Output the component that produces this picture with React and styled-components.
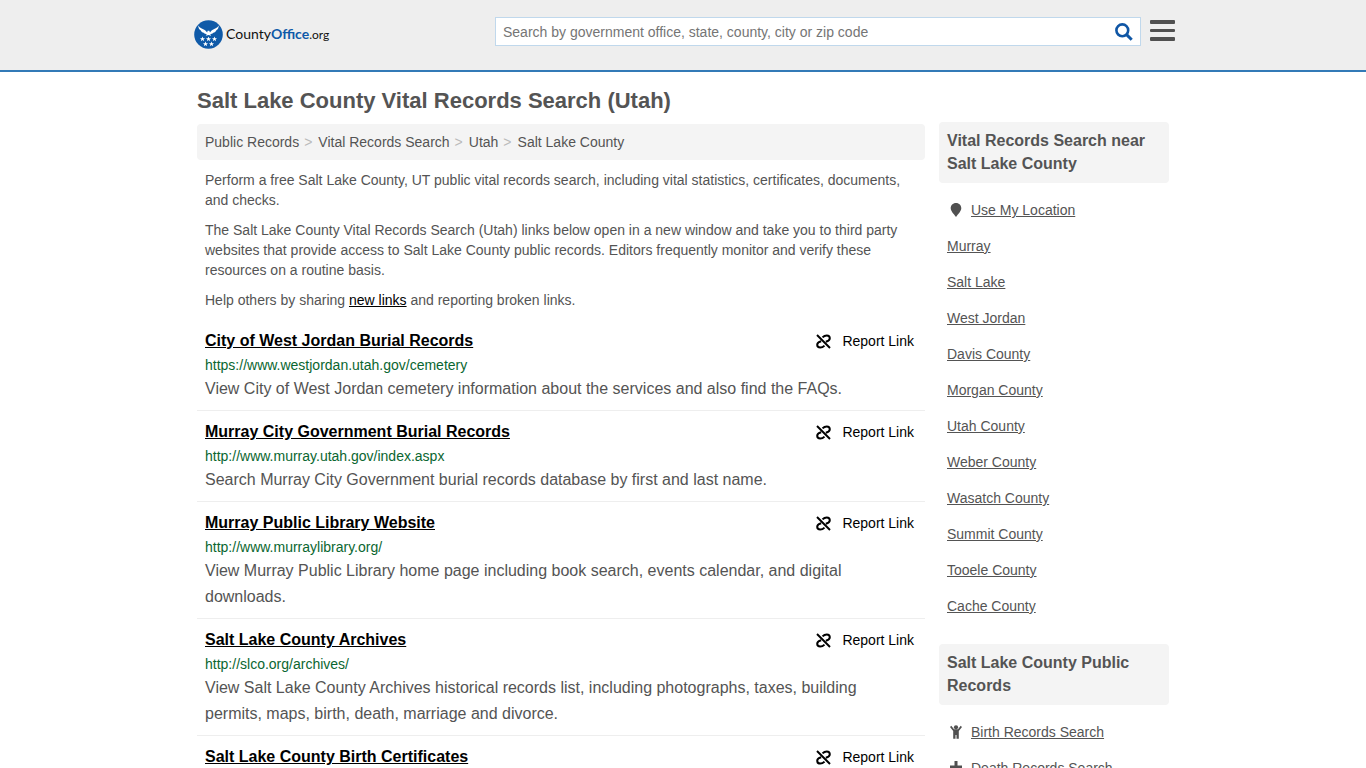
import React from "react";
import styled, { createGlobalStyle } from "styled-components";

const GlobalStyle = createGlobalStyle`
  * {
    box-sizing: border-box;
  }
  body {
    margin: 0;
    background: #fff;
    color: #545454;
    font-family: Arial, "Liberation Sans", sans-serif;
    font-size: 14px;
    line-height: 20px;
  }
  a {
    color: inherit;
  }
`;

const crumbs = ["Public Records", "Vital Records Search", "Utah", "Salt Lake County"];

const records = [
  {
    title: "City of West Jordan Burial Records",
    url: "https://www.westjordan.utah.gov/cemetery",
    text: "View City of West Jordan cemetery information about the services and also find the FAQs.",
  },
  {
    title: "Murray City Government Burial Records",
    url: "http://www.murray.utah.gov/index.aspx",
    text: "Search Murray City Government burial records database by first and last name.",
  },
  {
    title: "Murray Public Library Website",
    url: "http://www.murraylibrary.org/",
    text: "View Murray Public Library home page including book search, events calendar, and digital downloads.",
  },
  {
    title: "Salt Lake County Archives",
    url: "http://slco.org/archives/",
    text: "View Salt Lake County Archives historical records list, including photographs, taxes, building permits, maps, birth, death, marriage and divorce.",
  },
  {
    title: "Salt Lake County Birth Certificates",
  },
];

const places = [
  "Murray",
  "Salt Lake",
  "West Jordan",
  "Davis County",
  "Morgan County",
  "Utah County",
  "Weber County",
  "Wasatch County",
  "Summit County",
  "Tooele County",
  "Cache County",
];

const starPath = "M0 -2.6L.7 -.8L2.5 -.8L1.1 .4L1.6 2.2L0 1.1L-1.6 2.2L-1.1 .4L-2.5 -.8L-.7 -.8Z";
const stars = [
  [8.5, 19],
  [14.5, 19],
  [20.5, 19],
  [11.5, 24],
  [17.5, 24],
];

function LogoMark() {
  return (
    <svg width="29" height="29" viewBox="0 0 29 29" aria-hidden="true">
      <circle cx="14.5" cy="14.5" r="14.3" fill="#0f5aa8" />
      <path
        fill="#fff"
        d="M4.200 5.500C6 8.200 8.500 8.700 10.200 9.800C11.500 10.500 12.300 11.500 13.200 12.400L13.600 10.800L15.300 10.700L16 12.400C16.700 11.500 17.500 10.500 18.800 9.800C20.500 8.700 23 8.200 24.800 5.500C24.700 7.900 23.900 9.300 22.400 10.300C21.700 11.700 20.600 12.500 19.300 12.800C18.300 13.900 17.300 14.200 16.200 14.200L17.300 15.700L14.500 15L11.700 15.700L12.800 14.200C11.700 14.200 10.700 13.900 9.700 12.800C8.400 12.500 7.300 11.700 6.600 10.300C5.100 9.300 4.300 7.900 4.200 5.500Z"
      />
      {stars.map(([x, y]) => (
        <path key={`${x}-${y}`} d={starPath} fill="#fff" transform={`translate(${x} ${y})`} />
      ))}
    </svg>
  );
}

function SearchIcon() {
  return (
    <svg width="18" height="18" viewBox="0 0 18 18" fill="none" stroke="#0f56a5" aria-hidden="true">
      <circle cx="7.300" cy="7.300" r="5.900" strokeWidth="2.600" />
      <path d="M11.600 11.600L16.700 16.700" strokeWidth="3" />
    </svg>
  );
}

function MenuIcon() {
  return (
    <svg width="25" height="22" viewBox="0 0 25 22" fill="#505050" aria-hidden="true">
      <rect y="0" width="25" height="4" rx="1" />
      <rect y="9" width="25" height="3" rx="1" />
      <rect y="17" width="25" height="4" rx="1" />
    </svg>
  );
}

function BrokenLinkIcon() {
  return (
    <svg width="15" height="15" viewBox="0 0 15 15" fill="none" stroke="#000" strokeWidth="2" aria-hidden="true">
      <path d="M1 1L14 14" />
      <path d="M6.500 3.400C7.900 1.900 9.400 1.400 10.800 1.400C12.600 1.400 13.800 2.600 13.800 4.200C13.800 6 12.300 7.100 9.800 7.700" />
      <path d="M8.500 11.600C7.100 13.100 5.600 13.600 4.200 13.600C2.400 13.600 1.200 12.400 1.200 10.800C1.200 9 2.700 7.900 5.200 7.300" />
    </svg>
  );
}

function PinIcon() {
  return (
    <svg width="12" height="14" viewBox="0 0 12 14" fill="#505050" aria-hidden="true">
      <path d="M6 0C9.200 0 11.300 2.300 11.300 5.200C11.300 8 8.500 10.500 6 14C3.500 10.500 .7 8 .7 5.200C.7 2.300 2.800 0 6 0Z" />
    </svg>
  );
}

function ChildIcon() {
  return (
    <svg width="12" height="14" viewBox="0 0 12 14" fill="#505050" aria-hidden="true">
      <circle cx="6" cy="2.300" r="2.100" />
      <path d="M1.300 .8L4 4.300H8L10.700 .8L12 1.900L8.800 6V13.800H6.500V10H5.500V13.800H3.200V6L0 1.900Z" />
    </svg>
  );
}

function PlusIcon() {
  return (
    <svg width="12" height="14" viewBox="0 0 12 14" fill="#505050" aria-hidden="true">
      <path d="M4.500 0H7.500V4.500H12V7.500H7.500V12H4.500V7.500H0V4.500H4.500Z" />
    </svg>
  );
}

function App() {
  return (
    <>
      <GlobalStyle />
      <Header>
        <HeaderInner>
          <Logo href="#">
            <LogoMark />
            <LogoText>
              County<b>Office</b>
              <small>.org</small>
            </LogoText>
          </Logo>
          <SearchForm onSubmit={(e) => e.preventDefault()}>
            <SearchInput
              type="text"
              aria-label="Search"
              placeholder="Search by government office, state, county, city or zip code"
            />
            <IconButton type="submit" aria-label="Search">
              <SearchIcon />
            </IconButton>
          </SearchForm>
          <IconButton type="button" aria-label="Menu">
            <MenuIcon />
          </IconButton>
        </HeaderInner>
      </Header>

      <Page>
        <PageTitle>Salt Lake County Vital Records Search (Utah)</PageTitle>
        <Columns>
          <Main>
            <Breadcrumb>
              {crumbs.map((crumb) => (
                <li key={crumb}>
                  <a href="#">{crumb}</a>
                </li>
              ))}
            </Breadcrumb>
            <Intro>
              <p>
                Perform a free Salt Lake County, UT public vital records search, including vital statistics,
                certificates, documents, and checks.
              </p>
              <p>
                The Salt Lake County Vital Records Search (Utah) links below open in a new window and take you to
                third party websites that provide access to Salt Lake County public records. Editors frequently
                monitor and verify these resources on a routine basis.
              </p>
              <p>
                Help others by sharing <a href="#">new links</a> and reporting broken links.
              </p>
            </Intro>
            {records.map((record) => (
              <Record key={record.title}>
                <RecordHead>
                  <RecordTitle>
                    <a href="#">{record.title}</a>
                  </RecordTitle>
                  <ReportButton type="button">
                    <BrokenLinkIcon />
                    Report Link
                  </ReportButton>
                </RecordHead>
                {record.url && <RecordUrl>{record.url}</RecordUrl>}
                {record.text && <RecordText>{record.text}</RecordText>}
              </Record>
            ))}
          </Main>

          <Sidebar>
            <SideTitle>Vital Records Search near Salt Lake County</SideTitle>
            <SideList>
              <li>
                <PinIcon />
                <a href="#">Use My Location</a>
              </li>
              {places.map((place) => (
                <li key={place}>
                  <a href="#">{place}</a>
                </li>
              ))}
            </SideList>
            <SideTitle>Salt Lake County Public Records</SideTitle>
            <SideList>
              <li>
                <ChildIcon />
                <a href="#">Birth Records Search</a>
              </li>
              <li>
                <PlusIcon />
                <a href="#">Death Records Search</a>
              </li>
            </SideList>
          </Sidebar>
        </Columns>
      </Page>
    </>
  );
}

export default App;

const Header = styled.header`
  background: #eee;
  border-bottom: 2px solid #337ab7;
`;

const HeaderInner = styled.div`
  display: flex;
  align-items: flex-start;
  max-width: 988px;
  margin: 0 auto;
  padding: 17px 0 21px;
`;

const Logo = styled.a`
  display: flex;
  align-items: center;
  gap: 3px;
  margin-right: auto;
  padding-top: 3px;
  padding-left: 5px;
  color: #111;
  text-decoration: none;
`;

const LogoText = styled.span`
  font-family: Lato, sans-serif;
  font-size: 14px;

  b {
    color: #0f5aa8;
  }

  small {
    font-size: 12px;
  }
`;

// 검색창과 돋보기 버튼
const SearchForm = styled.form`
  display: flex;
  flex: 0 1 646px;
  align-items: center;
  height: 29px;
  margin-right: 9px;
  padding-right: 7px;
  border: 1px solid #c0d8ec;
  background: #fff;
`;

const SearchInput = styled.input`
  flex: 1;
  min-width: 0;
  padding: 0 7px;
  border: 0;
  outline: 0;
  background: none;
  color: #505050;
  font: inherit;

  &::placeholder {
    color: #757575;
  }
`;

const IconButton = styled.button`
  display: flex;
  padding: 0;
  border: 0;
  background: none;
  cursor: pointer;

  ${HeaderInner} > & {
    padding: 3px 2px 0 0;
  }
`;

const Page = styled.div`
  max-width: 972px;
  margin: 0 auto;
`;

const PageTitle = styled.h1`
  margin: 0;
  padding-top: 16px;
  font-size: 22px;
  line-height: 26px;
`;

const Columns = styled.div`
  display: flex;
  align-items: flex-start;
  gap: 14px;
  padding-top: 8px;
`;

const Main = styled.main`
  flex: 1;
  min-width: 0;
  padding-top: 2px;
`;

const Breadcrumb = styled.ul`
  display: flex;
  margin: 0;
  padding: 8px;
  border-radius: 4px;
  background: #f4f4f4;
  list-style: none;

  li + li::before {
    content: ">";
    padding: 0 6px 0 5px;
    color: #bbb;
  }

  a {
    text-decoration: none;
  }
`;

const Intro = styled.div`
  padding: 0 8px;

  p {
    margin: 10px 0;
  }

  a {
    color: #000;
  }
`;

const Record = styled.article`
  padding: 8px;
  border-bottom: 1px solid #eee;
`;

const RecordHead = styled.div`
  display: flex;
  justify-content: space-between;
  align-items: center;
  padding-right: 3px;
`;

const RecordTitle = styled.h2`
  margin: 0;
  color: #000;
  font-size: 16px;
  line-height: 26px;
`;

const ReportButton = styled.button`
  display: flex;
  align-items: center;
  gap: 11px;
  padding: 0;
  border: 0;
  background: none;
  color: #000;
  font: inherit;
  cursor: pointer;
`;

const RecordUrl = styled.div`
  color: #0a6630;
  line-height: 22px;
`;

const RecordText = styled.p`
  max-width: 680px;
  margin: 0;
  font-size: 16px;
  line-height: 26px;
`;

const Sidebar = styled.aside`
  flex: 0 0 230px;
`;

const SideTitle = styled.h2`
  margin: 0;
  padding: 7px 8px 8px;
  border-radius: 4px;
  background: #f4f4f4;
  font-size: 16px;
  line-height: 23px;
`;

const SideList = styled.ul`
  margin: 0;
  padding: 9px 8px 20px;
  list-style: none;

  li {
    display: flex;
    align-items: center;
    height: 36px;
  }

  svg {
    margin: 0 9px 0 3px;
  }
`;
